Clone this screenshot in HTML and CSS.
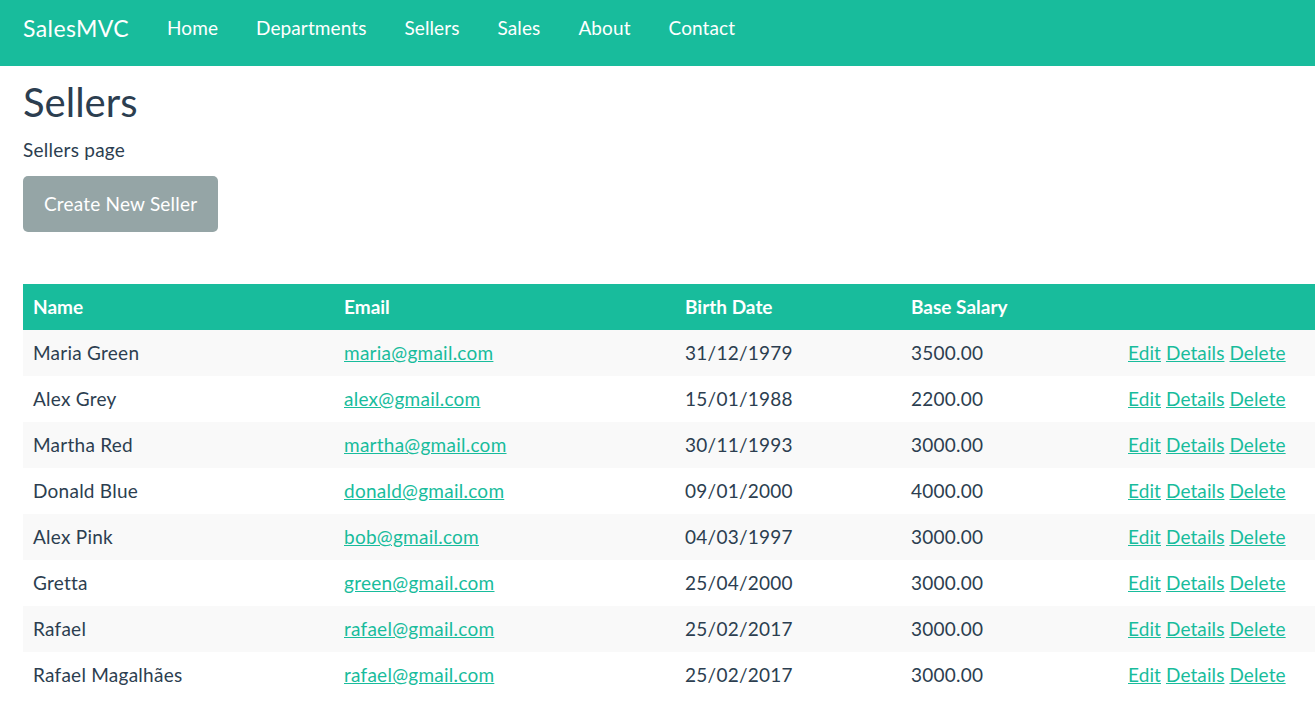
FILE: index.html
```html
<!DOCTYPE html>
<html lang="en">
<head>
<meta charset="utf-8">
<title>Sellers - SalesMVC</title>
<link rel="stylesheet" href="styles.css">
</head>
<body>
<header class="navbar">
  <a class="brand" href="#">SalesMVC</a>
  <nav class="nav">
    <a class="nav-link" href="#">Home</a>
    <a class="nav-link" href="#">Departments</a>
    <a class="nav-link" href="#">Sellers</a>
    <a class="nav-link" href="#">Sales</a>
    <a class="nav-link" href="#">About</a>
    <a class="nav-link" href="#">Contact</a>
  </nav>
</header>
<main class="content">
  <h2 class="title">Sellers</h2>
  <p class="subtitle">Sellers page</p>
  <a class="btn" href="#">Create New Seller</a>
  <table class="table">
    <colgroup>
      <col class="c-name"><col class="c-email"><col class="c-birth"><col class="c-salary"><col class="c-actions">
    </colgroup>
    <thead>
      <tr><th>Name</th><th>Email</th><th>Birth Date</th><th>Base Salary</th><th></th></tr>
    </thead>
    <tbody>
      <tr><td>Maria Green</td><td><a href="#">maria@gmail.com</a></td><td>31/12/1979</td><td>3500.00</td><td class="actions"><a href="#">Edit</a> <a href="#">Details</a> <a href="#">Delete</a></td></tr>
      <tr><td>Alex Grey</td><td><a href="#">alex@gmail.com</a></td><td>15/01/1988</td><td>2200.00</td><td class="actions"><a href="#">Edit</a> <a href="#">Details</a> <a href="#">Delete</a></td></tr>
      <tr><td>Martha Red</td><td><a href="#">martha@gmail.com</a></td><td>30/11/1993</td><td>3000.00</td><td class="actions"><a href="#">Edit</a> <a href="#">Details</a> <a href="#">Delete</a></td></tr>
      <tr><td>Donald Blue</td><td><a href="#">donald@gmail.com</a></td><td>09/01/2000</td><td>4000.00</td><td class="actions"><a href="#">Edit</a> <a href="#">Details</a> <a href="#">Delete</a></td></tr>
      <tr><td>Alex Pink</td><td><a href="#">bob@gmail.com</a></td><td>04/03/1997</td><td>3000.00</td><td class="actions"><a href="#">Edit</a> <a href="#">Details</a> <a href="#">Delete</a></td></tr>
      <tr><td>Gretta</td><td><a href="#">green@gmail.com</a></td><td>25/04/2000</td><td>3000.00</td><td class="actions"><a href="#">Edit</a> <a href="#">Details</a> <a href="#">Delete</a></td></tr>
      <tr><td>Rafael</td><td><a href="#">rafael@gmail.com</a></td><td>25/02/2017</td><td>3000.00</td><td class="actions"><a href="#">Edit</a> <a href="#">Details</a> <a href="#">Delete</a></td></tr>
      <tr><td>Rafael Magalhães</td><td><a href="#">rafael@gmail.com</a></td><td>25/02/2017</td><td>3000.00</td><td class="actions"><a href="#">Edit</a> <a href="#">Details</a> <a href="#">Delete</a></td></tr>
    </tbody>
  </table>
</main>
</body>
</html>
```
FILE: styles.css
```css
html, body {
  margin: 0;
  padding: 0;
  overflow: hidden;
}
body {
  font-family: Lato, "Noto Sans", "Liberation Sans", sans-serif;
  font-size: 19px;
  line-height: 1.5;
  letter-spacing: 0.25px;
  color: #2c3e50;
  background: #fff;
}
a {
  color: #18bc9c;
}
.navbar {
  height: 66px;
  background: #18bc9c;
  display: flex;
  align-items: flex-start;
  padding: 13px 23px 0;
  box-sizing: border-box;
  line-height: 30px;
}
.brand {
  color: #fff;
  text-decoration: none;
  font-size: 23px;
  letter-spacing: 0.4px;
  margin-right: 19px;
}
.nav {
  display: flex;
}
.nav-link {
  color: #fff;
  text-decoration: none;
  padding: 0 19px;
  font-size: 19px;
  letter-spacing: 0.1px;
}
.content {
  padding: 0 0 0 23px;
}
.title {
  margin: 12px 0 0;
  font-size: 40px;
  font-weight: 400;
  line-height: 1.2;
  letter-spacing: 0;
}
.subtitle {
  margin: 10px 0 0;
  line-height: 28px;
}
.btn {
  display: inline-block;
  margin-top: 12px;
  height: 56px;
  line-height: 56px;
  padding: 0 21px;
  background: #95a5a6;
  color: #fff;
  text-decoration: none;
  font-size: 19px;
  letter-spacing: 0.2px;
  border-radius: 5px;
}
.table {
  margin-top: 52px;
  width: 1292px;
  border-collapse: collapse;
  table-layout: fixed;
}
.c-name { width: 311px; }
.c-email { width: 341px; }
.c-birth { width: 226px; }
.c-salary { width: 217px; }
.table th, .table td {
  padding: 12px 10px;
  line-height: 22px;
  text-align: left;
  vertical-align: top;
  white-space: nowrap;
}
.table th {
  background: #18bc9c;
  color: #fff;
  font-weight: 700;
  letter-spacing: 0;
}
.table tbody tr:nth-child(odd) {
  background: #f9f9f9;
}
.table .actions {
  letter-spacing: 0.1px;
}
```
